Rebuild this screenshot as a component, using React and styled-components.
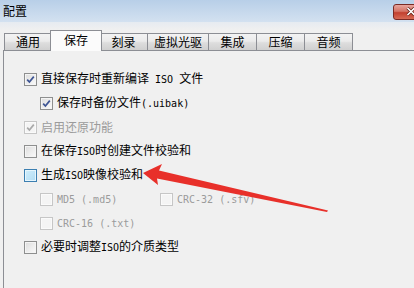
import React from "react";
import styled, { createGlobalStyle, css } from "styled-components";

const Global = createGlobalStyle`
  html, body { margin: 0; padding: 0; background: #f0f0f0; }
  body { font-family: "Noto Sans CJK SC", "Liberation Sans", sans-serif; }
`;

const Window = styled.div`
  position: relative;
  width: 414px;
  height: 288px;
  overflow: hidden;
  background: #f0f0f0;
  display: flex;
  flex-direction: column;
`;

const TitleBar = styled.div`
  height: 22px;
  flex: none;
  display: flex;
  align-items: center;
  padding-left: 3px;
  background: linear-gradient(#b8cfe8, #d3e1f0);
  font-size: 12px;
  color: #000;
`;

const Title = styled.span`
  line-height: 22px;
`;

const CloseButton = styled.div`
  margin-left: auto;
  margin-right: -22px;
  margin-top: 1px;
  width: 43px;
  height: 16px;
  border: 1px solid #7a2a24;
  border-radius: 3px;
  background: linear-gradient(#e8a59d 0%, #d47365 45%, #c2402f 55%, #d76a55 100%);
  display: flex;
  align-items: center;
  padding-left: 12px;
  box-sizing: border-box;
`;

const Gap = styled.div`
  height: 8px;
  flex: none;
  background: linear-gradient(#e6ebf1, #f0f0f0);
`;

const TabRow = styled.div`
  display: flex;
  align-items: flex-end;
  height: 20px;
  padding-left: 4px;
  flex: none;
  position: relative;
  z-index: 1;
`;

const Tab = styled.div`
  box-sizing: border-box;
  min-width: 48px;
  height: 17px;
  padding: 0 6px;
  border: 1px solid #8c8e94;
  border-bottom: none;
  border-left-width: ${(p) => (p.$first ? "1px" : "0")};
  background: linear-gradient(#f3f3f3, #ebebeb 45%, #dddddd 55%, #d0d0d0);
  font-size: 12px;
  line-height: 16px;
  text-align: center;
  color: #000;
  ${(p) =>
    p.$active &&
    css`
      min-width: 52px;
      margin: 0 -2px -1px -2px;
      height: 21px;
      border-left-width: 1px;
      background: #fbfbfb;
      position: relative;
      z-index: 2;
      line-height: 18px;
    `}
`;

const Panel = styled.div`
  flex: 1;
  margin-left: 3px;
  border-top: 1px solid #8c8e94;
  border-left: 1px solid #8c8e94;
  background: #f0f0f0;
  padding: 16px 0 0 20px;
  display: flex;
  flex-direction: column;
`;

const Row = styled.label`
  display: flex;
  align-items: center;
  gap: 4px;
  height: 24px;
  padding-left: ${(p) => p.$indent || 0}px;
  font-size: 12px;
  color: ${(p) => (p.$disabled ? "#9b9b9b" : "#000")};
  white-space: nowrap;
`;

const Text = styled.span`
  line-height: 16px;
`;

const SubGrid = styled.div`
  display: grid;
  grid-template-columns: 120px auto;
  padding-left: 16px;
`;

const Latin = styled.span`
  font-family: "DejaVu Sans Mono", "Liberation Mono", monospace;
  font-size: 10px;
`;

const Box = styled.span`
  box-sizing: border-box;
  width: 13px;
  height: 13px;
  flex: none;
  border: 1px solid ${(p) => (p.$hover ? "#3c7fb1" : p.$disabled ? "#c6c6c6" : "#8e8f8f")};
  background: ${(p) =>
    p.$hover
      ? "linear-gradient(135deg, #cfeefc, #b2dcf3)"
      : p.$disabled
      ? "#f4f4f4"
      : "linear-gradient(135deg, #dcdcdc, #fbfbfb)"};
  box-shadow: inset 0 0 0 1px ${(p) => (p.$hover ? "#e6f6fd" : p.$disabled ? "#fafafa" : "#f4f4f4")};
  display: flex;
  align-items: center;
  justify-content: center;
`;

const Arrow = styled.svg`
  position: absolute;
  left: 0;
  top: 0;
  pointer-events: none;
`;

function Check({ checked, disabled, hover }) {
  return (
    <Box $disabled={disabled} $hover={hover}>
      {checked && (
        <svg width="9" height="9" viewBox="0 0 9 9">
          <path
            d="M1.2 4.6 L3.4 7 L7.8 1.6"
            fill="none"
            stroke={disabled ? "#a9a9a9" : "#3d5493"}
            strokeWidth="1.7"
          />
        </svg>
      )}
    </Box>
  );
}

const tabs = ["通用", "保存", "刻录", "虚拟光驱", "集成", "压缩", "音频"];

export default function App() {
  return (
    <>
      <Global />
      <Window>
        <TitleBar>
          <Title>配置</Title>
          <CloseButton>
            <svg width="10" height="9" viewBox="0 0 10 9">
              <path d="M1.5 1 L8.5 8 M8.5 1 L1.5 8" stroke="#5a1a14" strokeWidth="3" />
              <path d="M1.5 1 L8.5 8 M8.5 1 L1.5 8" stroke="#fff" strokeWidth="1.6" />
            </svg>
          </CloseButton>
        </TitleBar>
        <Gap />
        <TabRow>
          {tabs.map((t, i) => (
            <Tab key={t} $first={i === 0} $active={i === 1}>
              {t}
            </Tab>
          ))}
        </TabRow>
        <Panel>
          <Row>
            <Check checked />
            <Text>
              直接保存时重新编译<Latin> ISO </Latin>文件
            </Text>
          </Row>
          <Row $indent={16}>
            <Check checked />
            <Text>
              保存时备份文件<Latin>(.uibak)</Latin>
            </Text>
          </Row>
          <Row $disabled>
            <Check checked disabled />
            <Text>启用还原功能</Text>
          </Row>
          <Row>
            <Check />
            <Text>
              在保存<Latin>ISO</Latin>时创建文件校验和
            </Text>
          </Row>
          <Row>
            <Check hover />
            <Text>
              生成<Latin>ISO</Latin>映像校验和
            </Text>
          </Row>
          <SubGrid>
            <Row $disabled>
              <Check disabled />
              <Text>
                <Latin>MD5 (.md5)</Latin>
              </Text>
            </Row>
            <Row $disabled>
              <Check disabled />
              <Text>
                <Latin>CRC-32 (.sfv)</Latin>
              </Text>
            </Row>
            <Row $disabled>
              <Check disabled />
              <Text>
                <Latin>CRC-16 (.txt)</Latin>
              </Text>
            </Row>
          </SubGrid>
          <Row>
            <Check />
            <Text>
              必要时调整<Latin>ISO</Latin>的介质类型
            </Text>
          </Row>
        </Panel>
        <Arrow width="414" height="288" viewBox="0 0 414 288">
          <polygon
            points="143,173 162,164 159,170.5 328,210.5 327,212 157,178.5 158,185"
            fill="#e8302a"
          />
        </Arrow>
      </Window>
    </>
  );
}
